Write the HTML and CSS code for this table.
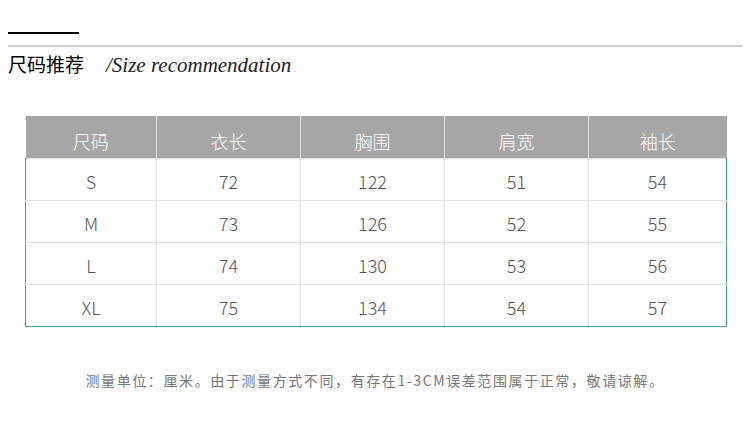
FILE: index.html
```html
<!DOCTYPE html>
<html lang="zh-CN">
<head>
<meta charset="utf-8">
<link rel="stylesheet" href="styles.css">
</head>
<body>
<div class="page">
  <div class="bar"></div>
  <div class="rule"></div>
  <div class="title">
    <span class="title-cn">尺码推荐</span>
    <span class="title-en">/Size recommendation</span>
  </div>
  <table class="size-table">
    <colgroup>
      <col class="c1"><col class="c2"><col class="c3"><col class="c4"><col class="c5">
    </colgroup>
    <thead>
      <tr><th>尺码</th><th>衣长</th><th>胸围</th><th>肩宽</th><th>袖长</th></tr>
    </thead>
    <tbody>
      <tr><td>S</td><td>72</td><td>122</td><td>51</td><td>54</td></tr>
      <tr><td>M</td><td>73</td><td>126</td><td>52</td><td>55</td></tr>
      <tr><td>L</td><td>74</td><td>130</td><td>53</td><td>56</td></tr>
      <tr><td>XL</td><td>75</td><td>134</td><td>54</td><td>57</td></tr>
    </tbody>
  </table>
  <p class="note">测量单位：厘米。由于测量方式不同，有存在1-3CM误差范围属于正常，敬请谅解。</p>
</div>
</body>
</html>
```
FILE: styles.css
```css
html, body {
  margin: 0;
  padding: 0;
  background: #fff;
}
.page {
  width: 750px;
  height: 446px;
  padding: 32px 8px 0;
  box-sizing: border-box;
  font-family: "Noto Sans CJK SC", "Noto Sans", sans-serif;
}
.bar {
  width: 71px;
  height: 2px;
  background: #000;
}
.rule {
  height: 2px;
  margin-top: 11px;
  background: #cfcfcf;
}
.title {
  display: flex;
  align-items: baseline;
  margin-top: 4px;
  height: 26px;
}
.title-cn {
  font-size: 19px;
  line-height: 26px;
  font-weight: 400;
  color: #000;
}
.title-en {
  margin-left: 22px;
  font-family: "Liberation Serif", serif;
  font-style: italic;
  font-size: 21px;
  color: #222;
}
.size-table {
  width: 701px;
  margin: 39px 0 0 17px;
  border-collapse: collapse;
  table-layout: fixed;
}
.c1 { width: 131px; }
.c2, .c3, .c4 { width: 144px; }
.c5 { width: 138px; }
.size-table th,
.size-table td {
  height: 42px;
  padding: 0;
  text-align: center;
  font-weight: 300;
  font-size: 18px;
  box-sizing: border-box;
}
.size-table th {
  padding-top: 9px;
  background: #a6a6a6;
  color: #fff;
  border-left: 1px solid #e6e6e6;
  border-right: 1px solid #e6e6e6;
}
.size-table th:first-child { border-left: none; }
.size-table th:last-child { border-right: none; }
.size-table td {
  padding-top: 4px;
  color: #555;
  border: 1px solid #e0e0e0;
}
.size-table tbody tr td:first-child { border-left: 1px solid #4a9e9e; }
.size-table tbody tr td:last-child { border-right: 1px solid #4a9e9e; }
.size-table tbody tr:last-child td { border-bottom: 1px solid #4a9e9e; }
.note {
  margin: 43px 0 0;
  text-align: center;
  font-size: 14px;
  letter-spacing: 1.6px;
  color: #777;
}
```
